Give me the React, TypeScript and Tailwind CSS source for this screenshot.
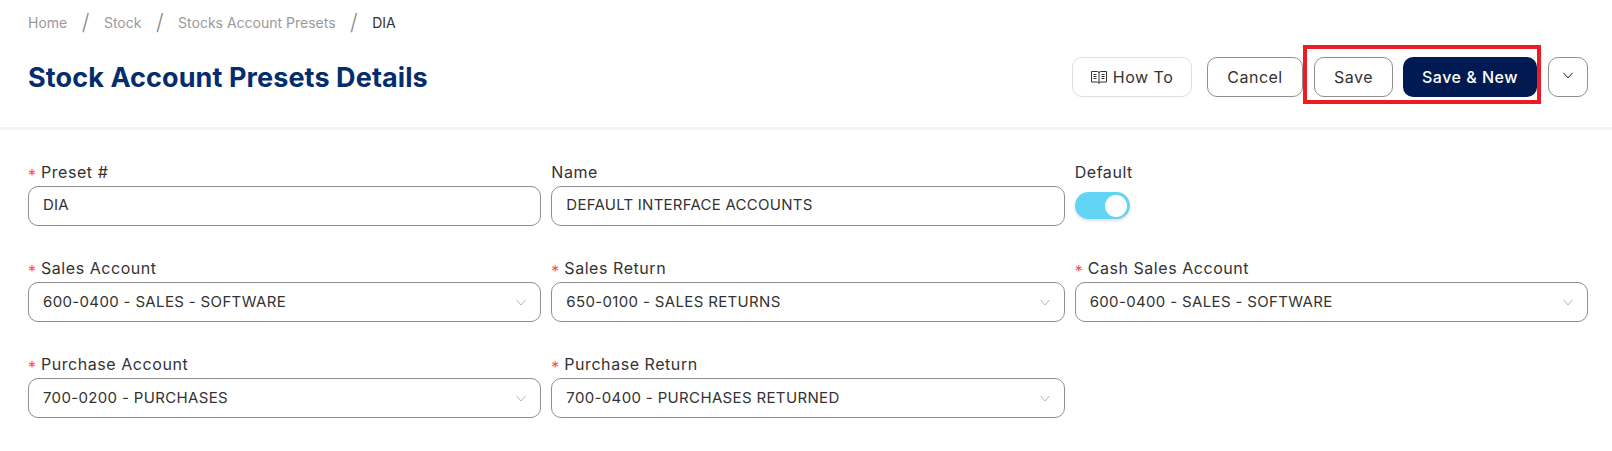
const FONT = "font-['Inter','Open_Sans',sans-serif]";

const crumbs = ["Home", "Stock", "Stocks Account Presets"];

function Chevron({ className }: { className?: string }) {
  return (
    <svg viewBox="0 0 10 7" fill="none" stroke="currentColor" strokeWidth="1" className={className}>
      <path d="M0.5 0.8 L5 6 L9.5 0.8" />
    </svg>
  );
}

function BookIcon() {
  return (
    <svg viewBox="0 0 16 13" fill="none" stroke="currentColor" strokeWidth="1" className="h-[13px] w-[16px] shrink-0">
      <path d="M8 1.5 V11.5 M0.5 0.5 H6.5 Q8 0.5 8 2 Q8 0.5 9.5 0.5 H15.5 V11 H9.5 Q8 11 8 12.5 Q8 11 6.5 11 H0.5 Z" />
      <path d="M2.5 3.5 H5.5 M2.5 5.5 H5.5 M2.5 7.5 H5.5 M10.5 3.5 H13.5 M10.5 5.5 H13.5 M10.5 7.5 H13.5" />
    </svg>
  );
}

function Label({ text, required }: { text: string; required?: boolean }) {
  return (
    <div className="flex h-[26px] items-center pb-[2px] text-[16px] tracking-[0.55px] text-[#333333]">
      {required && <span className="mr-[5px] mt-[6px] text-[16px] leading-none tracking-normal text-[#ff4d4f]">*</span>}
      {text}
    </div>
  );
}

function TextField({ label, value, required }: { label: string; value: string; required?: boolean }) {
  return (
    <div>
      <Label text={label} required={required} />
      <div className="flex h-[40px] items-center rounded-[10px] border border-[#8f8f8f] px-[14px] pb-[2px] text-[15px] tracking-[0.25px] text-[#333333]">
        {value}
      </div>
    </div>
  );
}

function SelectField({ label, value }: { label: string; value: string }) {
  return (
    <div>
      <Label text={label} required />
      <div className="flex h-[40px] items-center justify-between rounded-[10px] border border-[#8f8f8f] pl-[14px] pr-[14px] text-[15px] tracking-[0.35px] text-[#333333]">
        <span>{value}</span>
        <Chevron className="h-[7px] w-[10px] text-[#b5b5b5]" />
      </div>
    </div>
  );
}

export default function App() {
  return (
    <div className={`${FONT} h-[451px] w-[1612px] overflow-hidden bg-white`}>
      <header className="h-[130px] border-b-[3px] border-[#f3f3f3] pl-[28px] pr-[24px]">
        <nav className="flex h-[46px] items-center pb-[2px] text-[14px] text-[#9a9a9a]">
          {crumbs.map((c) => (
            <span key={c} className="flex items-center">
              {c}
              <span className="mx-[14.5px] text-[22px] font-light leading-none text-[#8a8a8a]">/</span>
            </span>
          ))}
          <span className="text-[#333333]">DIA</span>
        </nav>
        <div className="flex items-center justify-between pt-[10px]">
          <h1 className="pt-[2px] text-[27px] font-bold tracking-[0.1px] text-[#052d6e]">Stock Account Presets Details</h1>
          <div className="flex items-center text-[16px] tracking-[0.5px] text-[#333333]">
            <button className="flex h-[40px] w-[120px] items-center justify-center gap-[6px] rounded-[10px] border border-[#dddddd]">
              <BookIcon />
              How To
            </button>
            <button className="ml-[15px] h-[40px] w-[96px] rounded-[10px] border border-[#8f8f8f]">Cancel</button>
            <div className="relative ml-[11px] flex gap-[10px]">
              <button className="h-[40px] w-[79px] rounded-[10px] border border-[#8f8f8f]">Save</button>
              <button className="h-[40px] w-[134px] rounded-[10px] bg-[#021a52] font-medium text-white">Save &amp; New</button>
              <div className="absolute -bottom-[7px] -left-[11px] -right-[4px] -top-[12px] border-[4px] border-[#ed1c24]" />
            </div>
            <button className="ml-[11px] flex h-[40px] w-[40px] items-center justify-center rounded-[10px] border border-[#8f8f8f]">
              <Chevron className="mb-[3px] h-[7px] w-[10px]" />
            </button>
          </div>
        </div>
      </header>

      <main className="grid grid-cols-3 gap-x-[10px] gap-y-[30px] pl-[28px] pr-[24px] pt-[30px]">
        <TextField label="Preset #" value="DIA" required />
        <TextField label="Name" value="DEFAULT INTERFACE ACCOUNTS" />
        <div>
          <Label text="Default" />
          <div className="mt-[6px] flex h-[27px] w-[55px] items-center justify-end rounded-full bg-[#62d5f5] pr-[3px] shadow-[0_2px_3px_rgba(0,0,0,0.12)]">
            <div className="h-[22px] w-[22px] rounded-full bg-white" />
          </div>
        </div>

        <SelectField label="Sales Account" value="600-0400 - SALES - SOFTWARE" />
        <SelectField label="Sales Return" value="650-0100 - SALES RETURNS" />
        <SelectField label="Cash Sales Account" value="600-0400 - SALES - SOFTWARE" />

        <SelectField label="Purchase Account" value="700-0200 - PURCHASES" />
        <SelectField label="Purchase Return" value="700-0400 - PURCHASES RETURNED" />
      </main>
    </div>
  );
}
